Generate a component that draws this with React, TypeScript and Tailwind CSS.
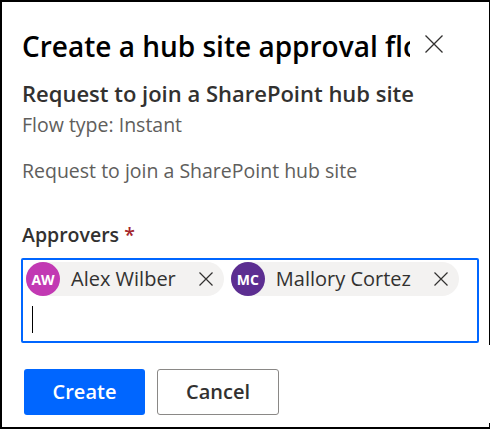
function Cross({ size, stroke = 1.3 }: { size: number; stroke?: number }) {
  return (
    <svg width={size} height={size} viewBox={`0 0 ${size} ${size}`} className="shrink-0 text-[#323130]">
      <path d={`M0.5 0.5 L${size - 0.5} ${size - 0.5} M${size - 0.5} 0.5 L0.5 ${size - 0.5}`} stroke="currentColor" strokeWidth={stroke} fill="none" />
    </svg>
  );
}

function Chip({ initials, name, color }: { initials: string; name: string; color: string }) {
  return (
    <div className="flex h-[34px] items-center rounded-full bg-[#f3f2f1] pr-[11px]">
      <div
        className={`flex h-[34px] w-[34px] items-center justify-center rounded-full text-[14px] font-bold text-white ${color}`}
      >
        {initials}
      </div>
      <span className="ml-[11px] text-[20px] leading-[26px] text-[#323130]">{name}</span>
      <span className="ml-[23px]">
        <Cross size={14} stroke={1.2} />
      </span>
    </div>
  );
}

export default function App() {
  return (
    <div className="relative h-[429px] w-[490px] overflow-hidden border-b-2 border-l-2 border-t-2 border-black bg-white font-['Open_Sans',sans-serif]">
      <span className="absolute right-0 top-0 h-[343px] w-px bg-black" />
      <span className="absolute bottom-0 right-0 h-[4px] w-px bg-black" />
      <div className="flex pl-[20px] pt-[26px]">
        <h1 className="w-[388px] overflow-hidden whitespace-nowrap text-[28px] font-semibold leading-[36px] text-black">
          Create a hub site approval flow
        </h1>
        <span className="ml-[15px] mt-[7px]">
          <Cross size={18} stroke={1.3} />
        </span>
      </div>
      <div className="pl-[20px]">
        <h2 className="mt-[14px] text-[22px] font-semibold leading-[30px] text-[#323130]">
          Request to join a SharePoint hub site
        </h2>
        <p className="mt-[4px] text-[19.5px] leading-[26px] text-[#605e5c]">Flow type: Instant</p>
        <p className="mt-[20px] text-[19.5px] leading-[26px] text-[#605e5c]">Request to join a SharePoint hub site</p>
        <p className="mt-[38px] text-[19.5px] font-semibold leading-[26px] text-[#323130]">
          Approvers <span className="text-[#a4262c]">*</span>
        </p>
        <div className="-ml-[1px] mt-[10px] h-[85px] w-[458px] rounded-[2px] border-2 border-[#0066ff] pl-[3px] pt-[2px]">
          <div className="flex gap-[7px]">
            <Chip initials="AW" name="Alex Wilber" color="bg-[#c239b3]" />
            <Chip initials="MC" name="Mallory Cortez" color="bg-[#5c2e91]" />
          </div>
          <div className="ml-[6px] mt-[10px] h-[27px] w-px bg-black" />
        </div>
        <div className="ml-[2px] mt-[26px] flex gap-[12px]">
          <button className="h-[46px] w-[121px] rounded-[3px] bg-[#0066ff] text-[20px] font-semibold text-white">
            Create
          </button>
          <button className="h-[46px] w-[122px] rounded-[3px] border border-[#8a8886] bg-white text-[20px] font-semibold text-[#323130]">
            Cancel
          </button>
        </div>
      </div>
    </div>
  );
}
